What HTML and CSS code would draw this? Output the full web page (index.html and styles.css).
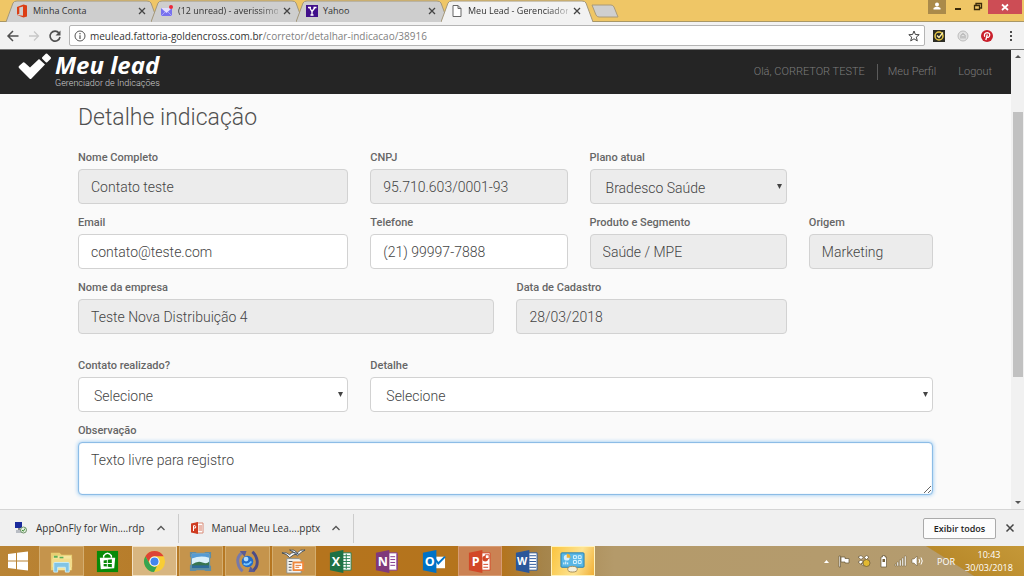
FILE: index.html
```html
<!DOCTYPE html>
<html lang="pt-BR">
<head>
<meta charset="utf-8">
<title>Meu Lead - Gerenciador de Indicações</title>
<link rel="stylesheet" href="styles.css">
</head>
<body>
<div class="tabstrip">
  <div class="tabs">
    <div class="tab">
      <svg class="tab-shape" viewBox="0 0 152 22" preserveAspectRatio="none"><path d="M0 22 L7 3 Q8 1 11 1 H141 Q144 1 145 3 L152 22"/></svg>
      <svg class="fav" viewBox="0 0 12 14"><path d="M1 3 7.500 .5 11 1.500V12.500L7.500 13.500 1 11 7 11.800V2.600L3.300 3.500V9.700L1 10.700Z" fill="#dc3e15"/></svg>
      <span class="tab-title">Minha Conta</span><button class="tab-close" aria-label="Fechar"><svg viewBox="0 0 8 8"><path d="M1 1 7 7M7 1 1 7"/></svg></button>
    </div>
    <div class="tab">
      <svg class="tab-shape" viewBox="0 0 152 22" preserveAspectRatio="none"><path d="M0 22 L7 3 Q8 1 11 1 H141 Q144 1 145 3 L152 22"/></svg>
      <svg class="fav" viewBox="0 0 12 14"><path d="M0 4H11V12H0Z" fill="#7771ee"/><path d="M0 4 5.500 9 11 4Z" fill="#e3defe"/><path d="M0 12 4 8M11 12 7 8" stroke="#aaa5fa"/><circle cx="10" cy="3" r="2" fill="#ed2839"/></svg>
      <span class="tab-title fade">(12 unread) - averissimo_</span><button class="tab-close" aria-label="Fechar"><svg viewBox="0 0 8 8"><path d="M1 1 7 7M7 1 1 7"/></svg></button>
    </div>
    <div class="tab">
      <svg class="tab-shape" viewBox="0 0 152 22" preserveAspectRatio="none"><path d="M0 22 L7 3 Q8 1 11 1 H141 Q144 1 145 3 L152 22"/></svg>
      <svg class="fav" viewBox="0 0 12 14"><path d="M0 1H12V13H0Z" fill="#41108b"/><path d="M2 3.500H5M7.500 3.500H10.500M3.500 3.500 6 7.500 9 3.500M6 7.500V11M4.500 11H7.500" fill="none" stroke="#fff" stroke-width="1.300"/></svg>
      <span class="tab-title">Yahoo</span><button class="tab-close" aria-label="Fechar"><svg viewBox="0 0 8 8"><path d="M1 1 7 7M7 1 1 7"/></svg></button>
    </div>
    <div class="tab active">
      <svg class="tab-shape" viewBox="0 0 152 22" preserveAspectRatio="none"><path d="M0 22 L7 3 Q8 1 11 1 H141 Q144 1 145 3 L152 22"/></svg>
      <svg class="fav" viewBox="0 0 12 14"><path d="M2 1.500H7L10 4.500V12.500H2ZM7 1.500V4.500H10" fill="#fff" stroke="#666"/></svg>
      <span class="tab-title fade">Meu Lead - Gerenciador</span><button class="tab-close" aria-label="Fechar"><svg viewBox="0 0 8 8"><path d="M1 1 7 7M7 1 1 7"/></svg></button>
    </div>
    <button class="newtab" aria-label="Nova guia"><svg viewBox="0 0 28 14"><path d="M1 1H20Q22 1 23 3L27 13H8Q6 13 5 11Z" fill="#cfcfcf" stroke="#aa9a77"/></svg></button>
  </div>
  <div class="window-buttons">
    <button class="user" aria-label="Usuário"><svg viewBox="0 0 18 14"><circle cx="9" cy="4.500" r="2" fill="#fff"/><path d="M5.500 9.500V8Q9 5.500 12.500 8V9.500Z" fill="#fff"/></svg></button>
    <button aria-label="Minimizar"><svg viewBox="0 0 18 14"><path d="M6 8H12V10H6Z" fill="#3a2a0a"/></svg></button>
    <button aria-label="Restaurar"><svg viewBox="0 0 18 14"><path d="M5.500 5.500H10.500V9.500H5.500ZM7 5V3.500H12.500V8H11" fill="none" stroke="#3a2a0a" stroke-width="1.300"/></svg></button>
    <button class="close" aria-label="Fechar janela"><svg viewBox="0 0 34 14"><path d="M14 4.500 20 10M20 4.500 14 10" stroke="#fff" stroke-width="1.700"/></svg></button>
  </div>
</div>

<div class="toolbar">
  <button aria-label="Voltar"><svg viewBox="0 0 14 14"><path d="M12.500 7H2.500M7 2 2 7 7 12" fill="none" stroke="#505050" stroke-width="1.500"/></svg></button>
  <button aria-label="Avançar"><svg viewBox="0 0 14 14"><path d="M2 7H11.500M7 2.500 11.500 7 7 11.500" fill="none" stroke="#c8c8c8" stroke-width="1.300"/></svg></button>
  <button aria-label="Recarregar"><svg viewBox="0 0 14 14"><path d="M11 4A5 5 0 1 0 12 8" fill="none" stroke="#505050" stroke-width="1.600"/><path d="M12.500 1.500V6.500H7.500Z" fill="#505050"/></svg></button>
  <div class="omnibox">
    <svg class="info" viewBox="0 0 12 12"><circle cx="6" cy="6" r="5" fill="none" stroke="#555"/><path d="M6 5.300V9M6 3V4.200" stroke="#555" stroke-width="1.200"/></svg>
    <span class="url">meulead.fattoria-goldencross.com.br<span>/corretor/detalhar-indicacao/38916</span></span>
    <svg class="info" viewBox="0 0 12 12"><path d="M6 1 7.400 4.500 11.200 4.700 8.300 7.100 9.300 10.900 6 8.800 2.700 10.900 3.700 7.100 .8 4.700 4.600 4.500Z" fill="none" stroke="#444"/></svg>
  </div>
  <div class="extensions">
    <button aria-label="Norton"><svg viewBox="0 0 14 14"><path d="M1 1H13V13H1Z" fill="#2d2d25"/><circle cx="7" cy="7" r="4" fill="none" stroke="#e9c944" stroke-width="1.500"/><path d="M5 6.500 7 8.500 11 3.500" fill="none" stroke="#fff3b0" stroke-width="1.300"/></svg></button>
    <button aria-label="Segurança"><svg viewBox="0 0 14 14"><circle cx="7" cy="7" r="5" fill="#e2e2e2" stroke="#bdbdbd"/><path d="M5 9.500V6.500Q7 3 9 6.500V9.500M7 7V9.500" fill="none" stroke="#a5a5a5"/></svg></button>
    <button aria-label="Pinterest"><svg viewBox="0 0 14 14"><circle cx="7" cy="7" r="6" fill="#c91f2b"/><path d="M4.700 7.800Q3.500 4 7.300 3.700 10.500 4 9.500 7 8.300 9.300 6.800 8M7.300 5.500 5.800 11" fill="none" stroke="#fff" stroke-width="1.300"/></svg></button>
    <button aria-label="Menu"><svg viewBox="0 0 14 14"><path d="M6 2h2v2H6zM6 6h2v2H6zM6 10h2v2H6z" fill="#4c4c4c"/></svg></button>
  </div>
</div>

<div class="viewport">
  <div class="page">
    <header class="site-header">
      <a class="brand" href="#">
        <svg viewBox="0 0 34 28"><path d="M1 13 5 9.500Q6 9 7 10L12 14.500 21 6 27 11.500 13.500 25.500Q12.500 26.500 11.500 25.500L1 15Q0 14 1 13Z" fill="#fff"/><rect x="25" y="1.500" width="7" height="7" rx="1" transform="rotate(45 28.500 5)" fill="#fff"/></svg>
        <span class="brand-text"><span class="brand-name">Meu lead</span><span class="brand-sub">Gerenciador de Indicações</span></span>
      </a>
      <nav><span class="hello">Olá, CORRETOR TESTE</span><a href="#">Meu Perfil</a><a href="#">Logout</a></nav>
    </header>
    <main>
      <h1>Detalhe indicação</h1>
      <form class="form">
        <div class="field w4"><label for="nome">Nome Completo</label><input id="nome" type="text" value="Contato teste" readonly></div>
        <div class="field w3"><label for="cnpj">CNPJ</label><input id="cnpj" type="text" value="95.710.603/0001-93" readonly></div>
        <div class="field w3 last"><label for="plano">Plano atual</label><select id="plano" disabled><option>Bradesco Saúde</option></select></div>
        <div class="field w4"><label for="email">Email</label><input id="email" type="email" value="contato@teste.com"></div>
        <div class="field w3"><label for="tel">Telefone</label><input id="tel" type="tel" value="(21) 99997-7888"></div>
        <div class="field w3"><label for="prod">Produto e Segmento</label><input id="prod" type="text" value="Saúde / MPE" readonly></div>
        <div class="field w2"><label for="orig">Origem</label><input id="orig" type="text" value="Marketing" readonly></div>
        <div class="field w6"><label for="emp">Nome da empresa</label><input id="emp" type="text" value="Teste Nova Distribuição 4" readonly></div>
        <div class="field w4"><label for="data">Data de Cadastro</label><input id="data" type="text" value="28/03/2018" readonly></div>
        <div class="field w4 section"><label for="contato">Contato realizado?</label><select id="contato"><option>Selecione</option></select></div>
        <div class="field w8 section"><label for="det">Detalhe</label><select id="det"><option>Selecione</option></select></div>
        <div class="field w12"><label for="obs">Observação</label><textarea id="obs" class="focused">Texto livre para registro</textarea></div>
      </form>
    </main>
  </div>
  <div class="scrollbar"><span class="arrow up"></span><span class="thumb"></span><span class="arrow down"></span></div>
</div>

<div class="downloads">
  <div class="download first">
    <svg viewBox="0 0 14 14"><path d="M1 1H8V7H1Z" fill="#1a2a9c"/><path d="M2 9H9V12H2Z" fill="#b9bdc4"/><path d="M4 7H6V9H4Z" fill="#888"/><circle cx="9.500" cy="9" r="3" fill="#e8f3e4" stroke="#6c8f66"/><path d="M8 9 9.300 10.300 11 7.500" fill="none" stroke="#3d8b35"/></svg>
    <span>AppOnFly for Win....rdp</span><button aria-label="Opções"><svg viewBox="0 0 10 8"><path d="M1.500 6 5 2.500 8.500 6" fill="none" stroke="#555" stroke-width="1.300"/></svg></button>
  </div>
  <div class="download">
    <svg viewBox="0 0 14 14"><path d="M6 2H13V12H6Z" fill="#fff" stroke="#d88a76"/><path d="M8.500 5H12M8.500 7H12M8.500 9H12" stroke="#d7755d"/><path d="M1 2.500 8 1V13L1 11.500Z" fill="#cf3b21"/><path d="M3.500 10V4.700H5Q6.300 5 5.500 7H3.500" fill="none" stroke="#fff"/></svg>
    <span>Manual Meu Lea....pptx</span><button aria-label="Opções"><svg viewBox="0 0 10 8"><path d="M1.500 6 5 2.500 8.500 6" fill="none" stroke="#555" stroke-width="1.300"/></svg></button>
  </div>
  <button class="show-all">Exibir todos</button>
  <button class="bar-close" aria-label="Fechar barra"><svg viewBox="0 0 10 10"><path d="M1.500 1.500 8.500 8.500M8.500 1.500 1.500 8.500" stroke="#444" stroke-width="1.500"/></svg></button>
</div>

<div class="taskbar">
  <button class="start" aria-label="Iniciar"><svg viewBox="0 0 24 22"><path d="M1 4 9 3V10.500H1ZM10 2.800 21 1.500V10.500H10ZM1 11.500H9V19L1 18ZM10 11.500H21V20.500L10 19.200Z" fill="#fff"/></svg></button>
  <div class="apps">
    <button class="open" aria-label="Explorador"><svg viewBox="0 0 26 26"><path d="M2 4H11L13 6H24V22H2Z" fill="#e8ce72"/><path d="M4 7H23V22H4Z" fill="#f5e5a0"/><path d="M5 8H9M11 9H15" stroke="#5caf56" stroke-width="2"/><path d="M3 10H24V19H3Z" fill="#f2dc8b"/><path d="M5 24V15Q5 14 6 14H20Q21 14 21 15V24H17V19H9V24Z" fill="#82c4e5" stroke="#caedf8"/></svg></button>
    <button aria-label="Loja"><svg viewBox="0 0 26 26"><path d="M2 2H24V24H2Z" fill="#078a08"/><path d="M5 9H21L20 20 6 21Z" fill="#fff"/><path d="M9 9V7Q13 2 17 7V9" fill="none" stroke="#fff" stroke-width="1.500"/><path d="M9 12 12.300 11.500V14.500H9ZM13.300 11.300 17.500 10.700V14.500H13.300ZM9 15.500H12.300V18.300L9 18ZM13.300 15.500H17.500V19L13.300 18.500Z" fill="#078a08"/></svg></button>
    <button class="current" aria-label="Chrome"><svg viewBox="0 0 26 26"><circle cx="13" cy="13" r="11" fill="#f8cd35"/><path d="M3.500 7.500A11 11 0 0 1 22.500 7.500H13A5.500 5.500 0 0 0 8.200 15.700Z" fill="#dd4436"/><path d="M3.500 7.500 8.200 15.700A5.500 5.500 0 0 0 15.500 18L12.500 24A11 11 0 0 1 3.500 7.500Z" fill="#36a451"/><circle cx="13" cy="13" r="5.300" fill="#fff"/><circle cx="13" cy="13" r="4.200" fill="#4286ed"/></svg></button>
    <button class="open" aria-label="Imagens"><svg viewBox="0 0 26 26"><path d="M2 3H8L9 4H17L18 3H24V9L23 10V17L24 18V23H18L17 22H9L8 23H2V17L3 16V9L2 8Z" fill="#5e8da5"/><path d="M4 5H22V20H4Z" fill="#d9f0fb"/><path d="M4 5H22V9Q13 6 4 10Z" fill="#549bd5"/><path d="M4 16Q10 12 15 14T22 13V20H4Z" fill="#387551"/><path d="M4 17H22V20H4Z" fill="#2e6c9a"/></svg></button>
    <button class="open" aria-label="Sincronizar"><svg viewBox="0 0 26 26"><circle cx="13" cy="13" r="6" fill="#226cc9"/><circle cx="11.500" cy="10.500" r="2.500" fill="#b0ddff"/><path d="M9 15Q13 18 17 13" stroke="#77c7ff" stroke-width="2" fill="none"/><path d="M7 4Q2 8 3 14 4 20 8 23" fill="none" stroke="#7779aa" stroke-width="3"/><path d="M18 23Q24 19 23 12 22 6 18 3" fill="none" stroke="#4c4c86" stroke-width="3"/><path d="M5 2 12 2 10 8ZM21 24 14 24 16 18Z" fill="#5b5b94"/></svg></button>
    <button class="open" aria-label="Impress"><svg viewBox="0 0 26 26"><path d="M6 10H19L21 12V25H6Z" fill="#f3f3ef" stroke="#8e8e87"/><path d="M8 13H12M8 16H11M8 19H11M8 22H11" stroke="#555"/><path d="M1 4Q6 3 9 6 12 2 18 5 13 5 9 9 6 5 1 4ZM9 1Q14 0 17 4 20 0 25 1 21 3 17 7 14 3 9 1Z" fill="#fff" stroke="#26384c" stroke-width=".8"/><rect x="12" y="13" width="12" height="10" rx="1" fill="#ef873b"/><path d="M14 15H22V21H14Z" fill="#fff"/><path d="M15 17H21M15 19H19" stroke="#df6c24"/></svg></button>
    <button aria-label="Excel"><svg viewBox="0 0 26 26"><path d="M13 4H24V22H13Z" fill="#fff" stroke="#288052"/><path d="M15 7H23M15 10H23M15 13H23M15 16H23M15 19H23M19 5V21" stroke="#288052"/><path d="M2 4 16 1V25L2 22Z" fill="#1e7145"/><text x="4" y="18" class="letter">X</text></svg></button>
    <button aria-label="OneNote"><svg viewBox="0 0 26 26"><path d="M13 4H24V22H13Z" fill="#fff" stroke="#83388f"/><path d="M17 8H22M17 11H22M17 14H22M17 17H22M24 5V21" stroke="#83388f"/><path d="M2 4 16 1V25L2 22Z" fill="#80397b"/><text x="4" y="18" class="letter">N</text></svg></button>
    <button aria-label="Outlook"><svg viewBox="0 0 26 26"><path d="M13 8H25V20H13Z" fill="#fff"/><path d="M15 11 18 15 25 8" fill="none" stroke="#0072c6" stroke-width="2"/><path d="M2 4 16 1V25L2 22Z" fill="#0072c6"/><text x="4" y="18" class="letter">O</text></svg></button>
    <button class="open ppt" aria-label="PowerPoint"><svg viewBox="0 0 26 26"><path d="M13 4H24V22H13Z" fill="#fff" stroke="#d24726"/><circle cx="19" cy="10" r="3" fill="#d24726"/><path d="M19 10V6H23V10Z" fill="#fff" stroke="#d24726"/><path d="M17 16H22M17 19H22" stroke="#d24726"/><path d="M2 4 16 1V25L2 22Z" fill="#d24726"/><text x="5" y="18" class="letter">P</text></svg></button>
    <button aria-label="Word"><svg viewBox="0 0 26 26"><path d="M13 4H24V22H13Z" fill="#fff" stroke="#2b579a"/><path d="M16 7H23M16 10H23M16 13H23M16 16H23M16 19H23" stroke="#2b579a"/><path d="M2 4 16 1V25L2 22Z" fill="#2b579a"/><text x="3" y="17" class="letter small">W</text></svg></button>
    <button class="highlight" aria-label="Painel de Controle"><svg viewBox="0 0 26 26"><rect x="1" y="4" width="24" height="15" rx="1" fill="#58b7e6" stroke="#287fb0"/><circle cx="7" cy="9" r="3" fill="#d7efff"/><path d="M7 9V5A4 4 0 0 1 11 9Z" fill="#efb132"/><path d="M14 7H17V10H14ZM19 7H22V10H19ZM14 12H17V15H14ZM19 12H22V15H19Z" fill="none" stroke="#dff6ff"/><path d="M4 16V14M6 16V13M8 16V14" stroke="#fff"/><ellipse cx="13" cy="21" rx="5" ry="3" fill="#f3f0dc" stroke="#a78b54"/></svg></button>
  </div>
  <div class="tray">
    <svg class="tray-icons" viewBox="0 0 104 18"><path d="M2 11 4.500 8 7 11Z" fill="#fff"/><g stroke="#665636" stroke-width=".7"><path d="M17 4H18.500V15H17ZM19 5H23V6.500H27V11H23V10H19Z" fill="#fff"/><path d="M36 5 39 3.500 41.500 5.500 39 7.500ZM42 5.500 44.500 3.500 47 5 44.500 7.500ZM36 10 39 8 41.500 10 38.500 12ZM39 12 42 10.500 44 12 42 14Z" fill="#fff"/><circle cx="44.500" cy="11" r="3.500" fill="#e2b931"/><path d="M59 5H60.500V3.500H63V5H64.500V15H59Z" fill="#fff"/></g><path d="M60.500 7H63V10H60.500Z" fill="#74603a"/><path d="M73 12H74V14H73ZM75 10H76.500V14H75ZM77.500 8H79V14H77.500ZM80 6H81.500V14H80ZM82.500 4H84V14H82.500Z" fill="#fff" stroke="#665636" stroke-width=".4"/><path d="M90 7H92L95 4V14L92 11H90Z" fill="#fff" stroke="#665636" stroke-width=".5"/><path d="M97 7Q98.500 9 97 11M99 5.500Q101.500 9 99 12.500" fill="none" stroke="#fff"/></svg>
    <span>POR</span>
    <div class="clock"><span>10:43</span><span>30/03/2018</span></div>
  </div>
</div>
</body>
</html>
```

FILE: styles.css
```css
* { box-sizing: border-box; }
html, body { height: 100%; }
body {
  margin: 0;
  display: flex;
  flex-direction: column;
  overflow: hidden;
  background: #fafafa;
  font-family: "Open Sans", "Noto Sans", sans-serif;
  font-size: 10px;
}
button { padding: 0; border: 0; background: none; font: inherit; color: inherit; }
svg { display: block; flex: none; }
a { color: inherit; text-decoration: none; }

/* Browser tabs */
.tabstrip {
  display: flex;
  justify-content: space-between;
  height: 22px;
  flex: none;
  background: #efc666;
  border-bottom: 1px solid #a99766;
}
.tabs { display: flex; padding-left: 6px; }
.tab {
  position: relative;
  isolation: isolate;
  display: flex;
  align-items: center;
  gap: 5px;
  width: 152px;
  height: 22px;
  margin-right: -7px;
  padding: 0 12px 0 10px;
  color: #333;
}
.tab.active { z-index: 1; }
.tab-shape { position: absolute; inset: 0; width: 100%; height: 100%; z-index: -1; }
.tab-shape path { fill: #cecece; stroke: #a3977a; }
.active .tab-shape path { fill: #f2f2f2; }
.fav { width: 12px; height: 14px; }
.tab-title { flex: 1; min-width: 0; white-space: nowrap; font-size: 9px; line-height: 16px; }
.fade { -webkit-mask-image: linear-gradient(90deg, #000 80%, #0004); mask-image: linear-gradient(90deg, #000 80%, #0004); }
.tab-close svg { width: 8px; height: 8px; }
.tab-close path { stroke: #444; stroke-width: 1.3; }
.newtab { align-self: center; margin-left: 5px; }
.newtab svg { width: 28px; height: 14px; }
.window-buttons { display: flex; height: 14px; padding-right: 2px; }
.window-buttons button { width: 20px; height: 14px; }
.window-buttons svg { height: 14px; margin: 0 auto; }
.window-buttons .user { width: 18px; background: #aa8a4a; margin-right: 2px; }
.window-buttons .close { width: 34px; background: #cd4d55; }

/* Address bar */
.toolbar {
  display: flex;
  align-items: center;
  gap: 7px;
  height: 28px;
  flex: none;
  padding: 0 6px;
  background: #f2f2f2;
  border-bottom: 1px solid #777;
}
.toolbar button svg { width: 14px; height: 14px; }
.omnibox {
  flex: 1;
  display: flex;
  align-items: center;
  gap: 4px;
  height: 21px;
  padding: 0 4px;
  border: 1px solid #b5b5b5;
  border-radius: 2px;
  background: #fff;
}
.info { width: 12px; height: 12px; }
.url { flex: 1; color: #333; font-size: 10px; line-height: 16px; }
.url span { color: #808080; }
.extensions { display: flex; gap: 10px; }

/* Page */
.viewport { flex: 1; min-height: 0; display: flex; }
.page { flex: 1; overflow: hidden; font-family: Roboto, sans-serif; color: #505050; }
.site-header {
  display: flex;
  align-items: center;
  justify-content: space-between;
  height: 44px;
  padding: 0 19px 0 18px;
  background: #252525;
}
.brand { display: flex; align-items: flex-start; gap: 3px; color: #fff; padding-bottom: 2px; }
.brand svg { width: 34px; height: 28px; }
.brand-text { display: flex; flex-direction: column; }
.brand-name { font: italic 700 24px/24px "Open Sans", sans-serif; }
.brand-sub { font-size: 9px; line-height: 12px; font-weight: 300; color: #d0d0d0; }
nav { display: flex; align-items: center; gap: 22px; font-size: 11px; line-height: 16px; font-weight: 300; color: #7d7d7d; }
.hello { padding-right: 12px; margin-right: -12px; border-right: 1px solid #5b5b5b; }
main { padding: 8px 78px 0; }
h1 { margin: 0 0 18px; font-weight: 300; font-size: 23px; line-height: 31px; }
.form { display: grid; grid-template-columns: repeat(12, minmax(0, 1fr)); column-gap: 22px; row-gap: 12px; }
.field { display: flex; flex-direction: column; }
.w2 { grid-column: span 2; }
.w3 { grid-column: span 3; }
.w4 { grid-column: span 4; }
.w6 { grid-column: span 6; }
.w8 { grid-column: span 8; }
.w12 { grid-column: span 12; }
.last { grid-column: 8 / span 3; }
.section { margin-top: 13px; }
label { height: 18px; font-size: 11px; line-height: 14px; font-weight: 500; color: #666; }
input, select, textarea {
  width: 100%;
  height: 35px;
  padding: 0 12px;
  border: 1px solid #d2d2d2;
  border-radius: 4px;
  background: #fff;
  color: #444;
  font: 300 14px/20px Roboto, sans-serif;
  outline: 0;
}
input:read-only { background: #ececec; }
select {
  appearance: none;
  padding: 2px 15px 0;
  background-image: url("data:image/svg+xml,%3Csvg xmlns='http://www.w3.org/2000/svg' width='5' height='5'%3E%3Cpath d='M0 0H5L2.500 5Z' fill='%23444'/%3E%3C/svg%3E");
  background-repeat: no-repeat;
  background-position: right 4px center;
}
select:disabled { background-color: #ececec; opacity: 1; color: #444; }
textarea { display: block; height: 53px; padding: 7px 12px; resize: vertical; }
.focused { border-color: #8cbce6; box-shadow: 0 0 4px #8cc4f2, inset 0 0 1px #8cbce6; }

.scrollbar { display: flex; flex-direction: column; align-items: center; width: 13px; padding: 5px 0; background: #f1f1f1; }
.arrow { border: 3px solid transparent; }
.up { border-top: 0; border-bottom-color: #555; }
.down { border-bottom: 0; border-top-color: #555; margin-top: auto; }
.thumb { width: 10px; height: 59%; margin-top: 54px; background: #c1c1c1; }

/* Downloads shelf */
.downloads {
  display: flex;
  align-items: center;
  height: 37px;
  flex: none;
  padding: 0 9px 0 0;
  background: #f0f0f0;
  border-top: 1px solid #d5d5d5;
  color: #333;
}
.download { display: flex; align-items: center; gap: 8px; height: 29px; padding: 0 12px 0 11px; border-right: 1px solid #ccc; line-height: 16px; }
.download.first { padding-left: 14px; }
.download > svg { width: 14px; height: 14px; }
.download button { margin-left: 3px; }
.download button svg { width: 10px; height: 8px; }
.show-all { margin-left: auto; width: 73px; height: 21px; border: 1px solid #aaa; border-radius: 2px; background: #fcfcfc; color: #222; font-size: 9px; font-weight: 600; }
.bar-close { margin-left: 9px; }
.bar-close svg { width: 10px; height: 10px; }

/* Taskbar */
.taskbar {
  display: flex;
  height: 30px;
  flex: none;
  background:
    linear-gradient(32deg, #0000 50%, #b98a2b 51%, #c59838 100%) right / 150px 100% no-repeat,
    linear-gradient(90deg, #b98435 0, #b5741d 30%, #b4741d 49%, #a5844a 53%, #b49a6a 60%, #b49c70 100%);
}
.start { width: 39px; padding-left: 7px; }
.start svg { width: 24px; height: 22px; }
.apps { display: grid; grid-template-columns: repeat(12, 1fr); column-gap: 2px; width: 556px; }
.apps button { display: grid; place-items: center; border: 1px solid transparent; }
.apps svg { width: 25px; height: 25px; }
.apps .open { background: #c5944c; border-color: #d4ae70; }
.apps .current { background: #d8b681; border-color: #f3e1c3; }
.apps .ppt { background: #cb8253; border-color: #d69c73; }
.apps .highlight { background: linear-gradient(110deg, #fac43e, #fde391 60%, #f1af36); border-color: #fff2bd; }
.letter { fill: #fff; font: 700 13px "Open Sans", sans-serif; }
.letter.small { font-size: 11px; }
.tray { display: flex; align-items: center; gap: 11px; margin-left: auto; padding-right: 12px; color: #fff; }
.tray-icons { width: 104px; height: 18px; }
.clock { display: flex; flex-direction: column; align-items: center; width: 46px; line-height: 13px; font-size: 9px; }
.tray > span { font-size: 9px; }
```
